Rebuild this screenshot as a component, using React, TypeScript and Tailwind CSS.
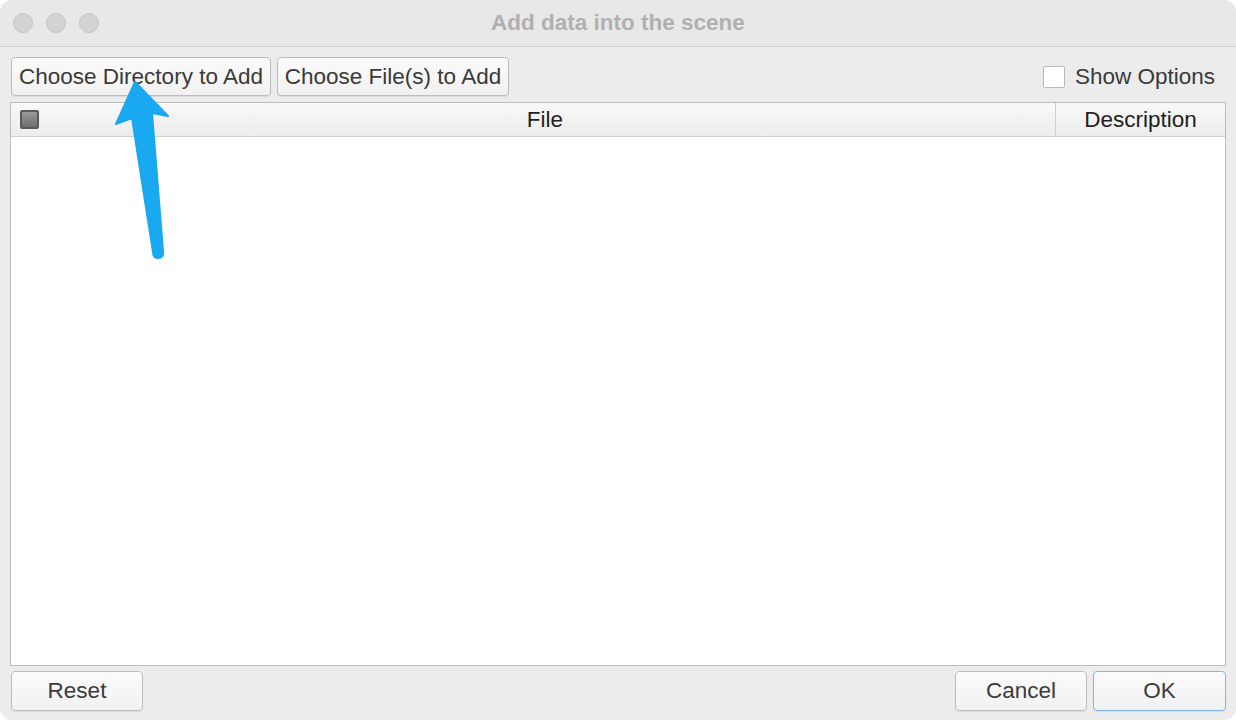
import React from "react";

const font = { fontFamily: '"Liberation Sans", Arial, sans-serif' };

interface BtnProps {
  label: string;
  className?: string;
  primary?: boolean;
}
const MacButton: React.FC<BtnProps> = ({ label, className, primary }) => {
  return (
    <div
      className={`h-[39px] flex items-center justify-center rounded-[4px] border bg-gradient-to-b from-[#fbfbfb] to-[#f1f1f1] text-[22.5px] text-[#3a3a3a] shadow-[0_1px_1px_rgba(0,0,0,0.08)]
        ${primary ? "border-[#7fb6ec]" : "border-[#bdbdbd]"} ${className ?? ""}`}
    >
      {label}
    </div>
  );
};

const Dot = () => (
  <div className="w-[20px] h-[20px] rounded-full bg-[#d3d3d3] border border-[#c3c3c3]" />
);

export default function App() {
  return (
    <div className="w-[1236px] h-[720px] bg-white" style={font}>
      <div className="relative w-full h-full rounded-[12px] bg-[#ececec] flex flex-col overflow-hidden">
        {/* title bar */}
        <div className="h-[47px] shrink-0 relative flex items-center border-b border-[#d2d2d2] bg-[#e8e8e8]">
          <div className="flex gap-[13px] pl-[13px]">
            <Dot />
            <Dot />
            <Dot />
          </div>
          <div className="absolute inset-0 flex items-center justify-center text-[22.5px] font-bold text-[#b0b0b0]">
            Add data into the scene
          </div>
        </div>

        {/* buttons row */}
        <div className="flex items-center px-[11px] pt-[10px] gap-[6px]">
          <MacButton label="Choose Directory to Add" className="w-[260px]" />
          <MacButton label="Choose File(s) to Add" className="w-[232px]" />
          <div className="ml-auto flex items-center gap-[10px] pr-[10px] pt-[1px]">
            <div className="w-[22px] h-[22px] bg-white border border-[#b9b9b9] rounded-[2px]" />
            <span className="text-[22.5px] text-[#3a3a3a]">Show Options</span>
          </div>
        </div>

        {/* table */}
        <div className="mx-[10px] mt-[6px] h-[564px] border border-[#bcbcbc] bg-white flex flex-col">
          <div className="h-[34px] flex border-b border-[#cfcfcf] bg-gradient-to-b from-[#f9f9f9] to-[#ececec] text-[22.5px] text-[#1f1f1f]">
            <div className="w-[36px] flex items-center justify-center">
              <div className="w-[19px] h-[19px] rounded-[2px] border-2 border-[#5a5a5a] bg-gradient-to-b from-[#9a9a9a] to-[#6e6e6e]" />
            </div>
            <div className="flex-1 flex items-center justify-center pr-[12px]">File</div>
            <div className="w-[170px] flex items-center justify-center border-l border-[#cfcfcf]">
              Description
            </div>
          </div>
          <div className="flex-1" />
        </div>

        {/* footer */}
        <div className="flex items-center px-[11px] pt-[5px] gap-[6px]">
          <MacButton label="Reset" className="w-[132px] h-[40px]" />
          <div className="flex-1" />
          <MacButton label="Cancel" className="w-[132px] h-[40px]" />
          <MacButton label="OK" primary className="w-[133px] h-[40px] mr-[-1px]" />
        </div>

        {/* annotation arrow */}
        <svg className="absolute left-0 top-0 pointer-events-none" width="1236" height="720">
          <path
            d="M135 82 L168 116 L152 113 L163 251 Q164 258 158 258 Q153 258 153 252 L132 118 L116 124 Z"
            fill="#18a9f0"
            stroke="#18a9f0"
            strokeWidth="2"
            strokeLinejoin="round"
          />
        </svg>
      </div>
    </div>
  );
}
